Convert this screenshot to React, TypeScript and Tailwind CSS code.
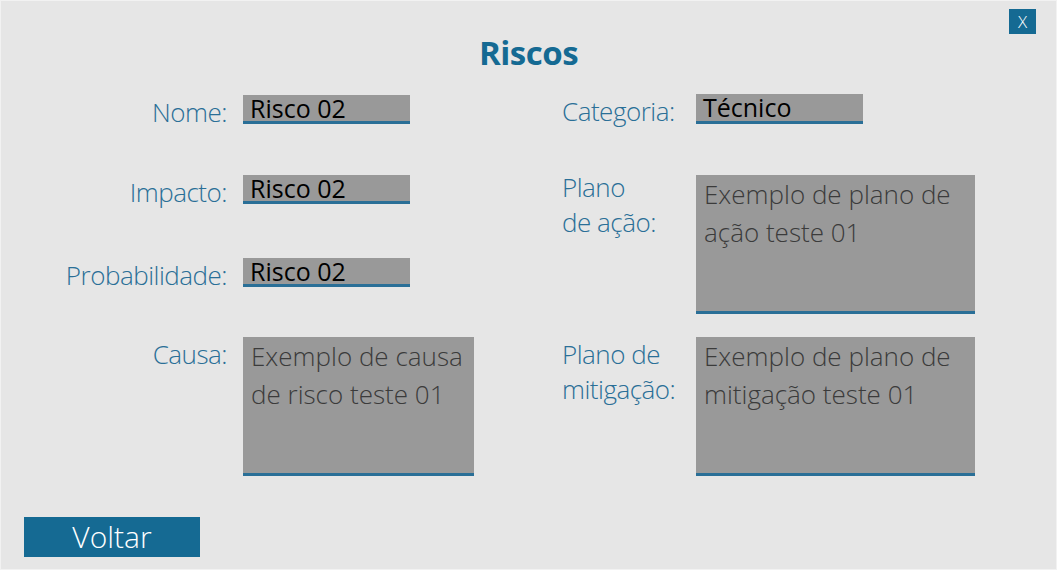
import React from 'react'

const font = { fontFamily: '"Open Sans", "Noto Sans", sans-serif' }

function LineInput({ value, width }: { value: string; width: string }) {
  return (
    <div
      className={`${width} h-[29px] bg-[#999999] border-b-[3px] border-[#2a6f97] pl-[7px] text-[25px] leading-[26px] text-black`}
    >
      {value}
    </div>
  )
}

function BoxInput({ value, width }: { value: string; width: string }) {
  return (
    <div
      className={`${width} h-[139px] bg-[#999999] border-b-[3px] border-[#2a6f97] pl-[8px] pr-2 text-[26px] leading-[38px] font-light text-[#3b3b3b]`}
    >
      {value}
    </div>
  )
}

const labelCls = 'text-[26px] leading-[35px] font-light tracking-[-0.5px] text-[#2a6f97]'

export default function App() {
  return (
    <div
      style={font}
      className="relative w-[1057px] h-[570px] bg-[#e6e6e6] border border-[#f2f2f2] flex flex-col overflow-hidden"
    >
      {/* fechar */}
      <button className="absolute top-[8px] right-[20px] w-[27px] h-[25px] bg-[#156a93] text-white text-[17px] leading-[25px] font-light flex items-center justify-center">
        X
      </button>

      <h1 className="pt-[32px] text-center text-[33px] leading-[40px] font-bold text-[#156a93] tracking-[-0.5px]">
        Riscos
      </h1>

      <div className="flex mt-[21px]">
        {/* coluna esquerda */}
        <div className="w-[561px] flex flex-col">
          <div className="flex items-start h-[29px] mt-[1px]">
            <div className={`w-[226px] text-right ${labelCls}`}>Nome:</div>
            <div className="ml-[16px]">
              <LineInput value="Risco 02" width="w-[167px]" />
            </div>
          </div>
          <div className="flex items-start h-[29px] mt-[51px]">
            <div className={`w-[226px] text-right ${labelCls}`}>Impacto:</div>
            <div className="ml-[16px]">
              <LineInput value="Risco 02" width="w-[167px]" />
            </div>
          </div>
          <div className="flex items-start h-[29px] mt-[54px]">
            <div className={`w-[226px] text-right ${labelCls}`}>Probabilidade:</div>
            <div className="ml-[16px]">
              <LineInput value="Risco 02" width="w-[167px]" />
            </div>
          </div>
          <div className="flex items-start mt-[50px]">
            <div className={`w-[226px] text-right ${labelCls}`}>Causa:</div>
            <div className="ml-[16px]">
              <BoxInput value="Exemplo de causa de risco teste 01" width="w-[231px]" />
            </div>
          </div>
        </div>

        {/* coluna direita */}
        <div className="flex-1 flex flex-col">
          <div className="flex items-start h-[30px]">
            <div className={`w-[134px] ${labelCls}`}>Categoria:</div>
            <LineInput value="Técnico" width="w-[167px] h-[30px]" />
          </div>
          <div className="flex items-start mt-[51px]">
            <div className={`w-[134px] -mt-[5px] ${labelCls}`}>
              Plano
              <br />
              de ação:
            </div>
            <BoxInput value="Exemplo de plano de ação teste 01" width="w-[279px]" />
          </div>
          <div className="flex items-start mt-[23px]">
            <div className={`w-[134px] ${labelCls}`}>
              Plano de
              <br />
              mitigação:
            </div>
            <BoxInput value="Exemplo de plano de mitigação teste 01" width="w-[279px]" />
          </div>
        </div>
      </div>

      <button className="ml-[23px] mt-[41px] w-[176px] h-[40px] bg-[#156a93] text-white text-[30px] leading-[40px] font-light text-center">
        Voltar
      </button>
    </div>
  )
}
